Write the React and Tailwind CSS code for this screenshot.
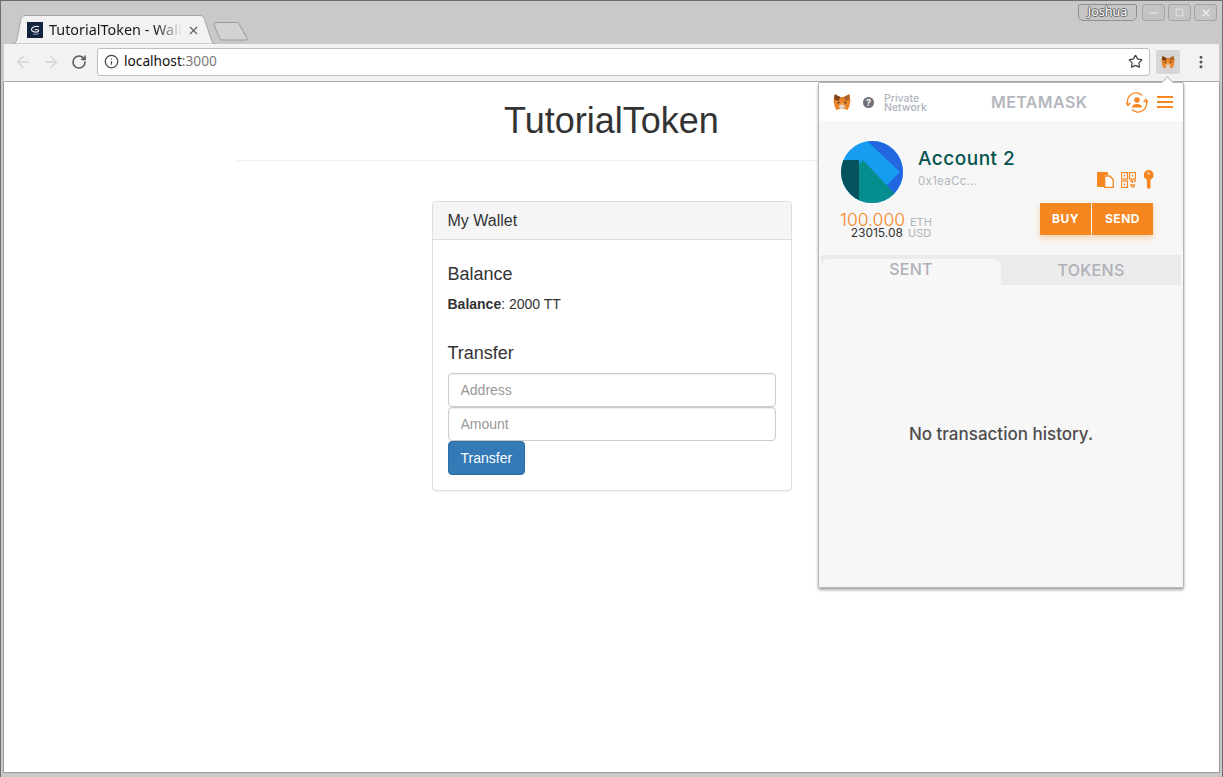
import { ArrowLeft, ArrowRight, RotateCw, Info, Star, X, Minus, Square, EllipsisVertical } from "lucide-react";

const MM_FONT = "font-['Inter','Liberation_Sans',sans-serif]";

const Fox = ({ size = 16 }) => (
  <svg width={size} height={size} viewBox="0 0 32 32">
    <path d="M3 2L13 7H19L29 2L31 14L29 24L26 30L19 28H13L6 30L3 24L1 14Z" fill="#ea8428" />
    <path d="M3 2L13 7 10 14 2 11Z" fill="#7a4418" />
    <path d="M29 2L19 7 22 14 30 11Z" fill="#a8652c" />
    <path d="M10 24l3-3h6l3 3-3 4h-6z" fill="#e3d2c4" />
    <path d="M13 21l3-5 3 5z" fill="#f7ad6b" />
    <circle cx="10" cy="17" r="1.6" fill="#233447" />
    <circle cx="22" cy="17" r="1.6" fill="#233447" />
  </svg>
);

const Favicon = () => (
  <svg width="16" height="16" viewBox="0 0 16 16">
    <rect width="16" height="16" fill="#12233f" />
    <path d="M12 4.800C9 3.600 4.500 4.800 4.500 7.500c0 2.200 3.800 3.200 6.200 2.300 1.500-.6 1-2.200-.6-2.300-1-.1-1.900.2-2.400.7" fill="none" stroke="#fff" strokeWidth="1.100" />
    <path d="M6 12c2 .6 4 .4 6-.6" fill="none" stroke="#aab4c6" strokeWidth=".8" />
  </svg>
);

const WindowButton = ({ children }) => (
  <div className="w-[23px] h-[17px] rounded-[3px] border border-[#a4a4a4] bg-[#c4c4c4] flex items-center justify-center text-[#efefef]">
    {children}
  </div>
);

const TitleBar = () => (
  <div className="relative h-[43px] bg-[#c9c9c9] shrink-0 flex justify-between pl-[11px] pr-[4px]">
    <div className="self-end flex items-end">
      {/* tab */}
      <div className="relative w-[204px] h-[29px]">
        <svg className="absolute inset-0" width="204" height="29" viewBox="0 0 204 29">
          <path d="M0.500 29C3 29 4 27 5 24L9 4C10 1.500 11 .5 13 .5H188C190 .5 191 1.500 192 3L199 24C200 27 201 29 204 29Z" fill="#f2f2f2" stroke="#a6a6a6" />
        </svg>
        <div className="relative flex items-center h-full pl-[15px] pt-[1px]">
          <Favicon />
          <span className="ml-[6px] w-[133px] overflow-hidden whitespace-nowrap text-[14.4px] text-[#1a1a1a] font-['Noto_Sans',sans-serif] [mask-image:linear-gradient(to_right,black_80%,transparent)]">
            TutorialToken - Wallet
          </span>
          <X size={13} strokeWidth={2} className="ml-[5px] text-[#5a5a5a]" />
        </div>
      </div>
      {/* new tab button */}
      <svg className="mb-[3px] -ml-[3px]" width="36" height="19" viewBox="0 0 36 19">
        <path d="M1 1.500C1 1 1.500.5 2 .5H24C25 .5 25.500 1 26 2L34 16C34.500 17 34 18 33 18H9C8 18 7.500 17.500 7 17L1 3Z" fill="#d2d2d2" stroke="#9a9a9a" />
      </svg>
    </div>
    <div className="flex items-start pt-[3px] pr-[1px]">
      <div className="w-[59px] h-[17px] mr-[5px] rounded-b-[5px] rounded-t-[2px] border border-[#8f8f8f] bg-[#c6c6c6] flex items-center justify-center text-[12.5px] leading-none text-white font-['Noto_Sans',sans-serif] [text-shadow:1px_0_0_#666,-1px_0_0_#666,0_1px_0_#666,0_-1px_0_#666]">
        Joshua
      </div>
      <div className="flex gap-[3px]">
        <WindowButton><Minus size={12} strokeWidth={2} /></WindowButton>
        <WindowButton><Square size={9} strokeWidth={2} /></WindowButton>
        <WindowButton><X size={12} strokeWidth={2.500} /></WindowButton>
      </div>
    </div>
  </div>
);

const ToolBar = () => (
  <div className="h-[38px] mx-[3px] pb-[2px] bg-[#f2f2f2] border-b border-[#a8a8a8] shrink-0 flex items-center">
    <div className="w-[93px] flex items-center pl-[10px] gap-[10px]">
      <ArrowLeft size={18} strokeWidth={2} className="text-[#d4d4d4]" />
      <ArrowRight size={18} strokeWidth={2} className="text-[#d4d4d4]" />
      <RotateCw size={16} strokeWidth={2.400} className="text-[#5a5a5a] ml-[1px]" />
    </div>
    <div className="w-[1053px] h-[28px] bg-white border border-[#bdbdbd] rounded-[3px] flex items-center pl-[6px] pr-[6px]">
      <Info size={15} strokeWidth={2} className="text-[#444]" />
      <span className="ml-[5px] text-[13.7px] text-[#111] font-['Noto_Sans',sans-serif]">
        localhost<span className="text-[#7a7a7a]">:3000</span>
      </span>
      <Star size={15} strokeWidth={2} className="ml-auto text-[#444]" />
    </div>
    <div className="ml-[6px] w-[24px] h-[24px] rounded-[2px] bg-[#d6d6d6] flex items-center justify-center">
      <Fox size={14} />
    </div>
    <EllipsisVertical size={16} strokeWidth={2.500} className="ml-[13px] text-[#555]" />
  </div>
);

const Wallet = () => (
  <div className="font-['Liberation_Sans',sans-serif] text-[14px] text-[#333] leading-[20px]">
    <div className="w-[750px] mx-auto border-b border-[#eee] pb-[15px] pt-[19px] h-[79px] text-center">
      <h1 className="text-[36px] leading-[40px]">TutorialToken</h1>
    </div>
    <div className="w-[360px] mx-auto mt-[40px] border border-[#ddd] rounded-[4px] shadow-[0_1px_1px_rgba(0,0,0,0.05)]">
      <div className="h-[38px] bg-[#f5f5f5] border-b border-[#ddd] rounded-t-[3px] px-[15px] flex items-center text-[16px]">
        My Wallet
      </div>
      <div className="p-[15px]">
        <h4 className="text-[18px] leading-[20px] mt-[9px]">Balance</h4>
        <p className="mt-[10px]"><strong>Balance</strong>: 2000 TT</p>
        <h4 className="text-[18px] leading-[20px] mt-[29px] mb-[10px]">Transfer</h4>
        <input
          placeholder="Address"
          className="block w-full h-[34px] border border-[#ccc] rounded-[4px] px-[12px] outline-none placeholder:text-[#999] shadow-[inset_0_1px_1px_rgba(0,0,0,0.075)]"
        />
        <input
          placeholder="Amount"
          className="block w-full h-[34px] border border-[#ccc] rounded-[4px] px-[12px] outline-none placeholder:text-[#999] shadow-[inset_0_1px_1px_rgba(0,0,0,0.075)]"
        />
        <button className="block h-[34px] px-[12px] bg-[#337ab7] border border-[#2e6da4] rounded-[4px] text-white">
          Transfer
        </button>
      </div>
    </div>
  </div>
);

const Identicon = () => (
  <svg width="62" height="62" viewBox="0 0 62 62" className="rounded-full shrink-0">
    <rect width="62" height="62" fill="#169cf0" />
    <path d="M26 0L59 31 45 45 62 62 70 0Z" fill="#2267e0" />
    <path d="M22 19L54 53 46 62H18V23Z" fill="#068e8f" />
    <path d="M0 19H18V62H0Z" fill="#03535f" />
  </svg>
);

const CopyIcon = () => (
  <svg width="17" height="17" viewBox="0 0 17 17">
    <path d="M0 2a1 1 0 011-1h9a1 1 0 011 1v2H7v12H1a1 1 0 01-1-1z" fill="#f6861f" />
    <path d="M7.700 5h5l3.500 3.500V16.300H7.700Z" fill="#fff" stroke="#f6861f" strokeWidth="1.300" />
  </svg>
);

const QrIcon = () => (
  <svg width="15" height="16" viewBox="0 0 15 16" fill="none" stroke="#f6861f">
    <rect x=".5" y=".5" width="6" height="6.500" strokeWidth="1.200" />
    <rect x="8.500" y=".5" width="6" height="6.500" strokeWidth="1.200" />
    <rect x=".5" y="9" width="6" height="6.500" strokeWidth="1.200" />
    <path d="M3.500 3v1.500M11.500 3v1.500M3.500 11.500V13M9 9h2.500v2M13 9h2M9 13h2v2.500M13 12v3.500" strokeWidth="1.500" />
  </svg>
);

const KeyIcon = () => (
  <svg width="11" height="19" viewBox="0 0 10 19">
    <path d="M5 0a5 5 0 012 9.600V18l-2 1-1.600-1.500V9.600A5 5 0 015 0z" fill="#f6861f" />
    <circle cx="5" cy="3.500" r="1.200" fill="#fbd0a6" />
  </svg>
);

const AccountSwitch = () => (
  <svg width="22" height="21" viewBox="0 0 22 21" fill="none" stroke="#f6861f" strokeWidth="1.300">
    <path d="M2.200 13A8.500 8.500 0 0116 3.500M19.800 8A8.500 8.500 0 016 17.500" />
    <path d="M0 10.500l2 3 2.400-2.500M22 10.500l-2-3-2.400 2.500" />
    <circle cx="11" cy="8" r="2.800" fill="#f6861f" stroke="none" />
    <path d="M6 15.500c0-2.500 2-3.500 5-3.500s5 1 5 3.500z" fill="#f6861f" stroke="none" />
  </svg>
);

const Hamburger = () => (
  <svg width="16" height="12" viewBox="0 0 16 12" fill="#f6861f">
    <rect width="16" height="2" />
    <rect y="5" width="16" height="2" />
    <rect y="10" width="16" height="2" />
  </svg>
);

const MetaMaskPopup = () => (
  <div className={`absolute left-[817px] top-[81px] w-[366px] h-[506px] bg-white border border-[#b5b5b5] rounded-[2px] shadow-[0_2px_3px_rgba(0,0,0,0.35)] flex flex-col ${MM_FONT}`}>
    {/* caret under the extension button */}
    <div className="absolute -top-[5px] left-[344px] w-[9px] h-[9px] rotate-45 bg-white border-l border-t border-[#b5b5b5]" />
    <div className="relative h-[38px] shrink-0 flex items-center pl-[14px] pr-[10px]">
      <Fox size={18} />
      <div className="ml-[12px] w-[11px] h-[11px] rounded-full bg-[#70707a] flex items-center justify-center text-white text-[9px] font-bold leading-none">?</div>
      <div className="ml-[10px] mt-[1px] text-[10.5px] leading-[9px] text-[#aeb3bd] font-medium">
        Private<br />Network
      </div>
      <div className="absolute left-[172px] text-[16px] font-semibold tracking-[0.4px] text-[#b4b7bd]">METAMASK</div>
      <div className="ml-auto flex items-center gap-[9px]">
        <AccountSwitch />
        <Hamburger />
      </div>
    </div>
    <div className="flex-1 bg-[#f7f7f7] flex flex-col min-h-0">
      <div className="h-[134px] shrink-0 pl-[22px] pr-[30px] pt-[20px] relative">
        <div className="flex">
          <Identicon />
          <div className="ml-[15px] flex-1">
            <div className="mt-[6px] text-[19px] leading-[24px] font-medium tracking-[0.5px] text-[#04524e]">Account 2</div>
            <div className="flex items-end justify-between -mt-[1px]">
              <div className="mt-[3px] text-[11.5px] leading-[14px] tracking-[0.3px] text-[#b4b7bd]">0x1eaCc...</div>
              <div className="flex items-center gap-[7px] -mr-[1px] -mb-[1px]">
                <CopyIcon />
                <QrIcon />
                <KeyIcon />
              </div>
            </div>
          </div>
        </div>
        <div className="flex justify-between items-start">
          <div className="ml-[-1px] mt-[10px] w-[95px] text-right">
            <div className="flex items-baseline justify-end h-[13px] leading-[13px]">
              <span className="text-[17.5px] font-light text-[#f6861f]">100.000</span>
              <span className="ml-[5px] w-[25px] text-left text-[11px] text-[#b0b3b8]">ETH</span>
            </div>
            <div className="flex items-baseline justify-end h-[13px] leading-[13px]">
              <span className="text-[12px] text-[#333]">23015.08</span>
              <span className="ml-[5px] w-[27px] text-left text-[11px] text-[#b0b3b8]">USD</span>
            </div>
          </div>
          <div className="flex mt-0 shadow-[0_3px_6px_rgba(246,134,31,0.35)]">
            <button className="w-[51px] h-[32px] bg-[#f6861f] text-white text-[12px] font-bold tracking-[0.5px]">BUY</button>
            <button className="w-[61px] h-[32px] ml-[1px] bg-[#f6861f] text-white text-[12px] font-bold tracking-[0.5px]">SEND</button>
          </div>
        </div>
      </div>
      <div className="mx-[2px] h-[30px] shrink-0 bg-[#ebebeb] flex text-[16px] font-medium tracking-[0.3px] text-[#aeb1b7]">
        <div className="w-[180px] bg-[#f7f7f7] rounded-t-[8px] mt-[4px] flex items-center justify-center pb-[6px]">SENT</div>
        <div className="flex-1 flex items-center justify-center">TOKENS</div>
      </div>
      <div className="flex-1 flex items-start justify-center pt-[139px] text-[17px] leading-[20px] font-medium text-[#4d4d4d]">
        No transaction history.
      </div>
    </div>
  </div>
);

export default function App() {
  return (
    <div className="relative w-[1223px] h-[777px] overflow-hidden bg-[#c9c9c9] border-t border-x border-[#6e6e6e] flex flex-col">
      <TitleBar />
      <ToolBar />
      <div className="flex-1 mx-[2px] mb-[4px] bg-white border-x border-b border-[#9a9a9a]">
        <Wallet />
      </div>
      <MetaMaskPopup />
    </div>
  );
}
